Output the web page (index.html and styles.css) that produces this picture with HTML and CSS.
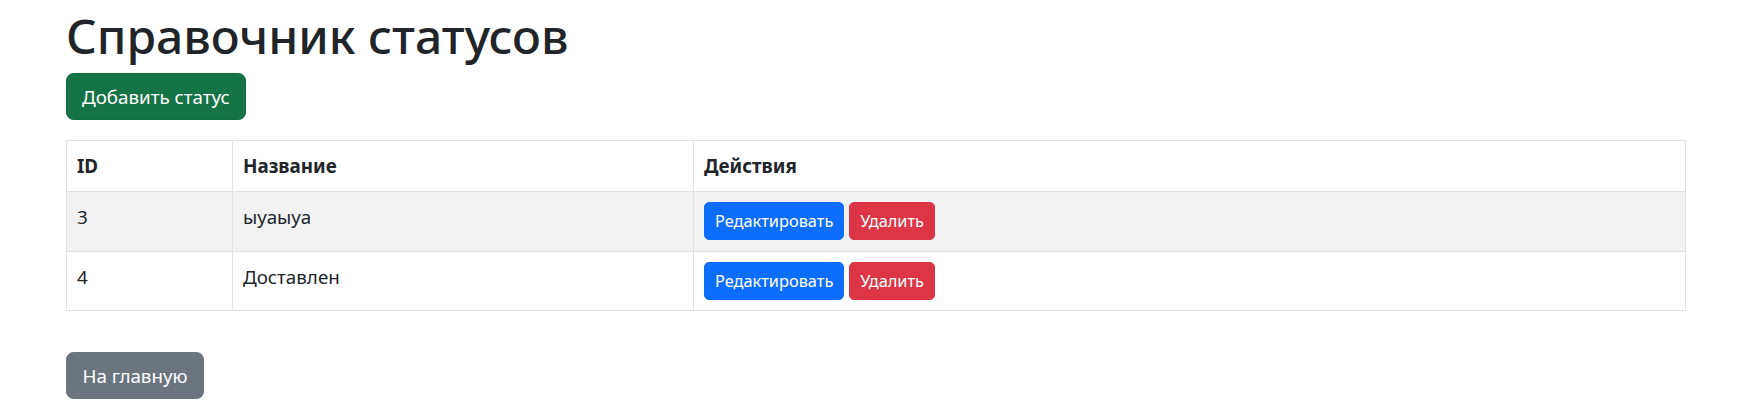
FILE: index.html
```html
<!DOCTYPE html>
<html lang="ru">
<head>
<meta charset="utf-8">
<title>Справочник статусов</title>
<link rel="stylesheet" href="styles.css">
</head>
<body>
<div class="container">
  <h1 class="title">Справочник статусов</h1>
  <a class="btn btn-success add-btn" href="#">Добавить статус</a>
  <table class="table">
    <colgroup>
      <col class="col-id">
      <col class="col-name">
      <col class="col-actions">
    </colgroup>
    <thead>
      <tr><th>ID</th><th>Название</th><th>Действия</th></tr>
    </thead>
    <tbody>
      <tr class="striped">
        <td>3</td>
        <td>ыуаыуа</td>
        <td><div class="actions"><a class="btn btn-sm btn-primary" href="#">Редактировать</a><a class="btn btn-sm btn-danger" href="#">Удалить</a></div></td>
      </tr>
      <tr>
        <td>4</td>
        <td>Доставлен</td>
        <td><div class="actions"><a class="btn btn-sm btn-primary" href="#">Редактировать</a><a class="btn btn-sm btn-danger" href="#">Удалить</a></div></td>
      </tr>
    </tbody>
  </table>
  <a class="btn btn-secondary home-btn" href="#">На главную</a>
</div>
</body>
</html>
```
FILE: styles.css
```css
* { box-sizing: border-box; }
body {
  margin: 0;
  font-family: "Noto Sans", "Open Sans", sans-serif;
  font-size: 18.8px;
  line-height: 30px;
  color: #212529;
  background: #fff;
}
.container {
  width: 1620px;
  margin-left: 66px;
  display: flex;
  flex-direction: column;
  align-items: flex-start;
}
.title {
  margin: 0 0 7px;
  padding-top: 6px;
  font-size: 48px;
  line-height: 60px;
  font-weight: 500;
  color: #212529;
}
.btn {
  display: inline-block;
  padding: 7.5px 15px;
  border: 1px solid transparent;
  border-radius: 7.5px;
  color: #fff;
  text-decoration: none;
  font-size: 18.8px;
  line-height: 30px;
  white-space: nowrap;
}
.btn-sm {
  padding: 5px 10px;
  border-radius: 5px;
  font-size: 16.35px;
  line-height: 26.25px;
}
.btn-success { background: #157347; border-color: #146c43; }
.btn-primary { background: #0d6efd; border-color: #0d6efd; }
.btn-danger { background: #dc3545; border-color: #dc3545; }
.btn-secondary { background: #6c757d; border-color: #6c757d; }
.add-btn { margin-bottom: 20px; }
.home-btn { margin-top: 21px; width: 138px; text-align: center; padding-left: 0; padding-right: 0; }
.table {
  width: 1620px;
  border-collapse: collapse;
  margin-bottom: 20px;
  table-layout: fixed;
}
.col-id { width: 166px; }
.col-name { width: 461px; }
.table th, .table td {
  border: 1px solid #dee2e6;
  padding: 10px;
  text-align: left;
  vertical-align: top;
}
.table th { font-weight: 700; }
.striped td { background: #f2f2f2; }
.actions {
  display: flex;
  gap: 5px;
}
.table tbody td { height: 59.5px; padding-bottom: 9px; }
```
